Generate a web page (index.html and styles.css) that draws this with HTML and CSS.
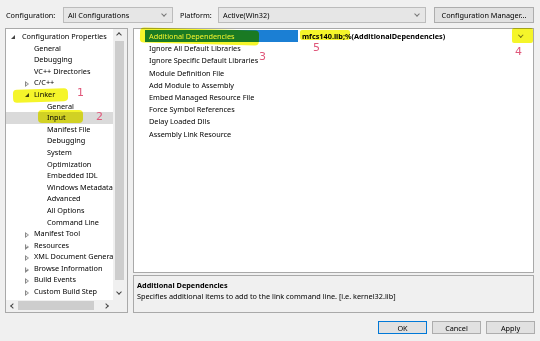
FILE: index.html
```html
<!DOCTYPE html>
<html lang="en">
<head>
  <meta charset="UTF-8">
  <title>Linker Input Property Pages</title>
  <link rel="stylesheet" href="styles.css">
</head>
<body>
  <div class="dialog">
    <!-- Configuration bar -->
    <div class="toolbar">
      <span class="tb-label">Configuration:</span>
      <div class="combo combo-config"><span>All Configurations</span><i class="chev"></i></div>
      <span class="tb-label tb-platform">Platform:</span>
      <div class="combo combo-platform"><span>Active(Win32)</span><i class="chev"></i></div>
      <button class="btn btn-manager">Configuration Manager...</button>
    </div>

    <div class="main">
      <!-- Tree -->
      <div class="tree">
        <ul class="tree-list">
          <li class="lvl0"><b class="arrow open"></b>Configuration Properties</li>
          <li class="lvl1">General</li>
          <li class="lvl1">Debugging</li>
          <li class="lvl1">VC++ Directories</li>
          <li class="lvl1"><b class="arrow closed"></b>C/C++</li>
          <li class="lvl1"><b class="arrow open"></b>Linker</li>
          <li class="lvl2">General</li>
          <li class="lvl2 selected">Input</li>
          <li class="lvl2">Manifest File</li>
          <li class="lvl2">Debugging</li>
          <li class="lvl2">System</li>
          <li class="lvl2">Optimization</li>
          <li class="lvl2">Embedded IDL</li>
          <li class="lvl2">Windows Metadata</li>
          <li class="lvl2">Advanced</li>
          <li class="lvl2">All Options</li>
          <li class="lvl2">Command Line</li>
          <li class="lvl1"><b class="arrow closed"></b>Manifest Tool</li>
          <li class="lvl1"><b class="arrow closed"></b>Resources</li>
          <li class="lvl1"><b class="arrow closed"></b>XML Document Generator</li>
          <li class="lvl1"><b class="arrow closed"></b>Browse Information</li>
          <li class="lvl1"><b class="arrow closed"></b>Build Events</li>
          <li class="lvl1"><b class="arrow closed"></b>Custom Build Step</li>
          <li class="lvl1"><b class="arrow closed"></b>Code Analysis</li>
        </ul>
        <div class="vscroll">
          <i class="sc-up"></i>
          <div class="vthumb"></div>
          <i class="sc-down"></i>
        </div>
        <div class="hscroll">
          <i class="sc-left"></i>
          <div class="hthumb"></div>
          <i class="sc-right"></i>
        </div>
        <div class="corner"></div>
      </div>

      <!-- Property grid + description -->
      <div class="right">
        <div class="grid">
          <div class="row selected">
            <div class="name">Additional Dependencies</div>
            <div class="value"><span class="val-text">mfcs140.lib;%(AdditionalDependencies)</span><i class="drop"><i class="chev"></i></i></div>
          </div>
          <div class="row"><div class="name">Ignore All Default Libraries</div></div>
          <div class="row"><div class="name">Ignore Specific Default Libraries</div></div>
          <div class="row"><div class="name">Module Definition File</div></div>
          <div class="row"><div class="name">Add Module to Assembly</div></div>
          <div class="row"><div class="name">Embed Managed Resource File</div></div>
          <div class="row"><div class="name">Force Symbol References</div></div>
          <div class="row"><div class="name">Delay Loaded Dlls</div></div>
          <div class="row"><div class="name">Assembly Link Resource</div></div>
        </div>
        <div class="desc">
          <div class="desc-title">Additional Dependencies</div>
          <div class="desc-text">Specifies additional items to add to the link command line. [i.e. kernel32.lib]</div>
        </div>
      </div>
    </div>

    <div class="buttons">
      <button class="btn btn-ok">OK</button>
      <button class="btn">Cancel</button>
      <button class="btn">Apply</button>
    </div>
  </div>

  <!-- highlighter marks and numbers drawn on top of the screenshot -->
  <div class="mark mark-linker"></div>
  <div class="mark mark-input"></div>
  <div class="mark mark-deps"></div>
  <div class="mark mark-value"></div>
  <div class="mark mark-drop"></div>
  <span class="num num1">1</span>
  <span class="num num2">2</span>
  <span class="num num3">3</span>
  <span class="num num4">4</span>
  <span class="num num5">5</span>
</body>
</html>
```

FILE: styles.css
```css
* {
  margin: 0;
  padding: 0;
  box-sizing: border-box;
}

body {
  background-color: #f0f0f0;
  color: #000;
  font-family: 'Noto Sans', 'Open Sans', sans-serif;
  font-size: 7.3px;
  width: 540px;
  height: 341px;
  overflow: hidden;
  position: relative;
}

ul {
  list-style-type: none;
}

.dialog {
  display: flex;
  flex-direction: column;
  height: 100%;
}

/* Toolbar */
.toolbar {
  display: flex;
  align-items: center;
  height: 16px;
  margin-top: 7px;
  padding-left: 6px;
}

.tb-label {
  width: 57px;
}

.tb-platform {
  width: 38px;
  margin-left: 7px;
}

.combo {
  position: relative;
  height: 16px;
  background-color: #e6e6e6;
  border: 1px solid #bcbcbc;
  padding: 0 0 0 4px;
  display: flex;
  align-items: center;
}

.combo-config {
  width: 110px;
}

.combo-platform {
  width: 208px;
}

.chev {
  position: absolute;
  width: 4px;
  height: 4px;
  border-right: 1px solid #777;
  border-bottom: 1px solid #777;
  transform: rotate(45deg);
}

.combo .chev {
  right: 6px;
  top: 4px;
}

.btn {
  font-family: inherit;
  font-size: 7.3px;
  color: #000;
  background-color: #e1e1e1;
  border: 1px solid #adadad;
  height: 16px;
}

.btn-manager {
  width: 100px;
  margin-left: 8px;
}

/* Main area */
.main {
  display: flex;
  margin-top: 5px;
  padding-left: 5px;
  gap: 5px;
}

.tree {
  width: 123px;
  height: 285px;
  background-color: #fff;
  border: 1px solid #a9a9a9;
  display: grid;
  grid-template-columns: 1fr 14px;
  grid-template-rows: 1fr 12px;
  overflow: hidden;
}

.tree-list {
  padding-top: 2px;
  overflow: hidden;
  white-space: nowrap;
}

.tree-list li {
  position: relative;
  height: 11.6px;
  line-height: 11.6px;
}

.tree-list li.lvl0 { padding-left: 16px; }
.tree-list li.lvl1 { padding-left: 28px; }
.tree-list li.lvl2 { padding-left: 41px; }

.tree-list li.selected {
  background-color: #dadada;
}

.arrow {
  position: absolute;
  top: 4px;
  width: 0;
  height: 0;
}

.lvl0 .arrow { left: 5px; }
.lvl1 .arrow { left: 19px; }

.arrow.open {
  border-left: 4px solid transparent;
  border-bottom: 4px solid #444;
}

.arrow.closed {
  border-top: 3px solid transparent;
  border-bottom: 3px solid transparent;
  border-left: 4px solid #888;
}

.arrow.closed::after {
  content: '';
  position: absolute;
  left: -3px;
  top: -1.5px;
  border-top: 1.5px solid transparent;
  border-bottom: 1.5px solid transparent;
  border-left: 2px solid #fff;
}

.vscroll {
  position: relative;
  background-color: #f0f0f0;
}

.vthumb {
  position: absolute;
  left: 2px;
  right: 3px;
  top: 12px;
  bottom: 20px;
  background-color: #cdcdcd;
}

.sc-up, .sc-down, .sc-left, .sc-right {
  position: absolute;
  width: 4px;
  height: 4px;
  border-left: 1px solid #444;
  border-top: 1px solid #444;
}

.sc-up { left: 4px; top: 4px; transform: rotate(45deg); }
.sc-down { left: 4px; bottom: 6px; transform: rotate(225deg); }

.hscroll {
  position: relative;
  background-color: #f0f0f0;
}

.hthumb {
  position: absolute;
  left: 12px;
  width: 76px;
  top: 1px;
  bottom: 2px;
  background-color: #cdcdcd;
}

.sc-left { left: 5px; top: 4px; transform: rotate(-45deg); }
.sc-right { right: 5px; top: 4px; transform: rotate(135deg); }

.corner {
  background-color: #f0f0f0;
}

/* Property grid */
.right {
  display: flex;
  flex-direction: column;
  gap: 2px;
  width: 401px;
}

.grid {
  height: 245px;
  background-color: #fff;
  border: 1px solid #a9a9a9;
  padding-top: 1px;
}

.row {
  display: flex;
  height: 12.2px;
  line-height: 12.2px;
}

.row .name {
  width: 164px;
  padding-left: 15px;
  white-space: nowrap;
}

.row.selected .name {
  margin-left: 11px;
  width: 153px;
  padding-left: 4px;
  background-color: #1b7fd4;
  color: #fff;
}

.value {
  position: relative;
  flex: 1;
  padding-left: 4px;
}

.val-text {
  font-weight: bold;
}

.drop {
  position: absolute;
  right: 6px;
  top: 1px;
  width: 11px;
  height: 10px;
}

.drop .chev {
  left: 3px;
  top: 2px;
  width: 3.5px;
  height: 3.5px;
}

/* Description */
.desc {
  height: 38px;
  border: 1px solid #a9a9a9;
  padding: 4px 0 0 3px;
  line-height: 11px;
}

.desc-title {
  font-weight: bold;
}

/* Dialog buttons */
.buttons {
  display: flex;
  justify-content: flex-end;
  gap: 5px;
  padding-right: 5px;
  margin-top: 8px;
}

.buttons .btn {
  width: 49px;
  height: 13px;
  line-height: 10px;
}

.buttons .btn-ok {
  border-color: #0078d7;
}

/* Highlighter overlay */
.mark {
  position: absolute;
  background-color: #f5f52a;
  mix-blend-mode: multiply;
  border-radius: 4px;
}

.mark-linker { left: 13px; top: 89px; width: 55px; height: 13px; transform: rotate(-2deg); }
.mark-input { left: 38px; top: 110px; width: 45px; height: 13px; }
.mark-deps { left: 140px; top: 29px; width: 119px; height: 15px; transform: rotate(1.5deg); }
.mark-value { left: 300px; top: 30px; width: 50px; height: 10px; border-radius: 2px; }
.mark-drop { left: 512px; top: 28px; width: 21px; height: 15px; border-radius: 2px; }

.num {
  position: absolute;
  font-family: 'DejaVu Sans', sans-serif;
  font-size: 11px;
  line-height: 11px;
  color: #e0577a;
}

.num1 { left: 77px; top: 87px; }
.num2 { left: 96px; top: 111px; }
.num3 { left: 259px; top: 51px; }
.num4 { left: 515px; top: 46px; }
.num5 { left: 313px; top: 42px; }
```
